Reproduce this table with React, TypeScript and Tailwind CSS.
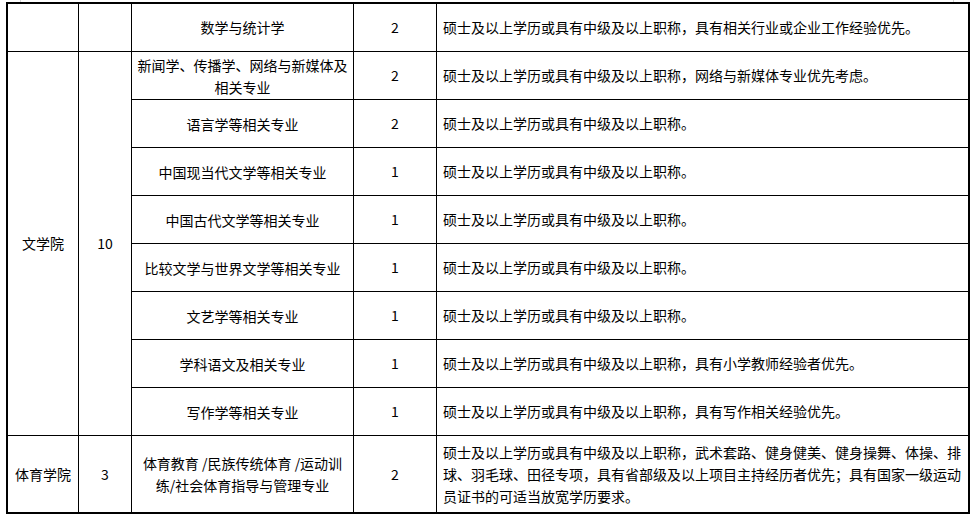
import React from "react"

const font = { fontFamily: '"Noto Sans CJK SC", "Noto Sans", sans-serif' }

type Row = { major: React.ReactNode; count: string; req: React.ReactNode }

const literature: Row[] = [
  {
    major: (
      <>
        新闻学、传播学、网络与新媒体及
        <br />
        相关专业
      </>
    ),
    count: "2",
    req: "硕士及以上学历或具有中级及以上职称，网络与新媒体专业优先考虑。",
  },
  { major: "语言学等相关专业", count: "2", req: "硕士及以上学历或具有中级及以上职称。" },
  { major: "中国现当代文学等相关专业", count: "1", req: "硕士及以上学历或具有中级及以上职称。" },
  { major: "中国古代文学等相关专业", count: "1", req: "硕士及以上学历或具有中级及以上职称。" },
  { major: "比较文学与世界文学等相关专业", count: "1", req: "硕士及以上学历或具有中级及以上职称。" },
  { major: "文艺学等相关专业", count: "1", req: "硕士及以上学历或具有中级及以上职称。" },
  {
    major: "学科语文及相关专业",
    count: "1",
    req: "硕士及以上学历或具有中级及以上职称，具有小学教师经验者优先。",
  },
  {
    major: "写作学等相关专业",
    count: "1",
    req: "硕士及以上学历或具有中级及以上职称，具有写作相关经验优先。",
  },
]

function Cell({ children, className = "" }: { children?: React.ReactNode; className?: string }) {
  return <div className={`bg-white flex items-center ${className}`}>{children}</div>
}

export default function App() {
  return (
    <div className="w-[971px] h-[519px] bg-white text-[14px] text-black" style={font}>
      <div className="h-[2px] flex">
        <div className="ml-[20px] w-px bg-[#d4d4d4]" />
        <div className="ml-[932px] w-px bg-[#d4d4d4]" />
      </div>
      <div className="ml-[6px] w-[964px] border-2 border-black">
        <div className="grid grid-cols-[70px_52px_221px_82px_531px] grid-rows-[repeat(9,47px)_76px] gap-px bg-black">
          {/* previous college, continued */}
          <Cell />
          <Cell />
          <Cell className="justify-center text-center">数学与统计学</Cell>
          <Cell className="justify-center">2</Cell>
          <Cell className="pl-[6px]">硕士及以上学历或具有中级及以上职称，具有相关行业或企业工作经验优先。</Cell>

          <Cell className="row-span-8 justify-center">文学院</Cell>
          <Cell className="row-span-8 justify-center">10</Cell>
          {literature.map((r, i) => (
            <React.Fragment key={i}>
              <Cell className="justify-center text-center leading-[22px]">
                <div>{r.major}</div>
              </Cell>
              <Cell className="justify-center">{r.count}</Cell>
              <Cell className="pl-[6px]">{r.req}</Cell>
            </React.Fragment>
          ))}

          <Cell className="justify-center">体育学院</Cell>
          <Cell className="justify-center">3</Cell>
          <Cell className="justify-center text-center leading-[22px]">
            <div>
              体育教育 /民族传统体育 /运动训
              <br />
              练/社会体育指导与管理专业
            </div>
          </Cell>
          <Cell className="justify-center">2</Cell>
          <Cell className="pl-[6px] leading-[22px]">
            <div>
              硕士及以上学历或具有中级及以上职称，武术套路、健身健美、健身操舞、体操、排
              <br />
              球、羽毛球、田径专项，具有省部级及以上项目主持经历者优先；具有国家一级运动
              <br />
              员证书的可适当放宽学历要求。
            </div>
          </Cell>
        </div>
      </div>
    </div>
  )
}
